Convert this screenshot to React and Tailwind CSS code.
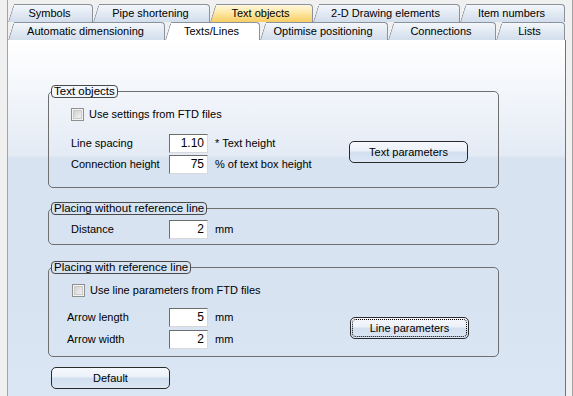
import React from "react";

function Tab({ label, w, kind }) {
  const bg =
    kind === "yellow"
      ? "bg-[linear-gradient(to_bottom,#fff8de,#fde8a6_45%,#f8cd62)]"
      : kind === "white"
      ? "bg-white"
      : "bg-[linear-gradient(to_bottom,#f4f7fb,#e0e8f2_55%,#d3deec)]";
  return (
    <div className={`relative h-[18px] shrink-0 ${w} ${kind ? "z-10" : ""}`}>
      <div
        className={`absolute left-0 top-0 bottom-0 w-[16px] origin-bottom-left skew-x-[-17deg] rounded-tl-[4px] border-l border-t border-[#8a929e] ${bg}`}
      />
      <div
        className={`absolute left-[6px] right-0 top-0 bottom-0 rounded-tr-[4px] border-t border-r border-[#8a929e] ${bg}`}
      />
      <span className="relative flex h-full items-center justify-center pr-[2px] leading-none">
        {label}
      </span>
    </div>
  );
}

function Check() {
  return (
    <div className="h-[13px] w-[13px] shrink-0 border border-[#8f8f8f] bg-[#f4f4f4] p-[1px]">
      <div className="h-full w-full border border-[#c9c9c9] bg-[linear-gradient(135deg,#d2d2d2,#f2f2f2)]" />
    </div>
  );
}

function Field({ value }) {
  return (
    <div className="flex h-[19px] w-[39px] shrink-0 items-center justify-end border-t border-l border-[#6e6e6e] border-r-[#d8d8d8] border-b-[#d8d8d8] border-r border-b bg-white pr-[3px] text-[12px]">
      {value}
    </div>
  );
}

function Btn({ children, focus, className = "" }) {
  return (
    <div
      className={`relative flex h-[22px] w-[119px] shrink-0 items-center justify-center rounded-[5px] border border-[#2a2a2a] bg-[linear-gradient(to_bottom,#f5f8fc_0%,#edf2f9_42%,#d2dfef_52%,#dde7f4_100%)] ${className}`}
    >
      {focus && (
        <div className="absolute inset-[1px] rounded-[4px] border border-dotted border-black" />
      )}
      <span className="relative">{children}</span>
    </div>
  );
}

function Legend({ children }) {
  return (
    <legend className="ml-[2px] h-[13px] rounded-[4px] border border-[#4a4a4a] bg-transparent px-[2px] text-[11.5px] leading-[11px]">
      {children}
    </legend>
  );
}

function Row({ label, value, unit, mt = "", pl = "pl-[22px]" }) {
  return (
    <div className={`flex h-[19px] items-center ${pl} ${mt}`}>
      <div className={`${pl === "pl-[22px]" ? "w-[98px]" : "w-[102px]"} shrink-0`}>{label}</div>
      <Field value={value} />
      <div className="ml-[7px] whitespace-nowrap">{unit}</div>
    </div>
  );
}

export default function App() {
  return (
    <div className="flex h-[396px] w-[573px] overflow-hidden bg-[#f0f0f0] font-['Liberation_Sans',Arial,sans-serif] text-[11px] leading-[13px] text-black">
      <div className="w-[7px] shrink-0" />
      <div className="w-px shrink-0 bg-[#a3a3a3]" />
      <div className="flex w-[558px] shrink-0 flex-col">
        <div className="mt-[4px] flex">
          <Tab label="Symbols" w="w-[85px]" />
          <Tab label="Pipe shortening" w="w-[117px]" />
          <Tab label="Text objects" w="w-[103px]" kind="yellow" />
          <Tab label="2-D Drawing elements" w="w-[147px]" />
          <Tab label="Item numbers" w="w-[105px]" />
        </div>
        <div className="flex">
          <Tab label="Automatic dimensioning" w="w-[157px]" />
          <Tab label="Texts/Lines" w="w-[95px]" kind="white" />
          <Tab label="Optimise positioning" w="w-[128px]" />
          <Tab label="Connections" w="w-[108px]" />
          <Tab label="Lists" w="w-[69px]" />
        </div>
        <div className="flex flex-1 flex-col border-r border-[#6e7384] bg-[linear-gradient(to_bottom,#ffffff_0px,#e4ebf5_115px,#d8e3f1_118px,#d7e3f1_250px,#dbe6f4_100%)] pl-[40px] pt-[45px]">
          {/* Group 1 */}
          <fieldset className="m-0 w-[451px] min-w-0 rounded-[5px] border border-[#6f6f6f] p-0 pb-[13px]">
            <Legend>Text objects</Legend>
            <div className="mt-[10px] flex items-center pl-[22px]">
              <Check />
              <span className="ml-[5px]">Use settings from FTD files</span>
            </div>
            <div className="mt-[13px] flex items-start">
              <div className="w-[300px] shrink-0">
                <Row label="Line spacing" value="1.10" unit="* Text height" />
                <Row label="Connection height" value="75" unit="% of text box height" mt="mt-[2px]" />
              </div>
              <Btn className="mt-[7px]">Text parameters</Btn>
            </div>
          </fieldset>

          {/* Group 2 */}
          <fieldset className="m-0 mt-[14px] w-[451px] min-w-0 rounded-[5px] border border-[#6f6f6f] p-0 pb-[5px]">
            <Legend>Placing without reference line</Legend>
            <Row label="Distance" value="2" unit="mm" mt="mt-[5px]" />
          </fieldset>

          {/* Group 3 */}
          <fieldset className="m-0 mt-[16px] w-[451px] min-w-0 rounded-[5px] border border-[#6f6f6f] p-0 pb-[7px]">
            <Legend>Placing with reference line</Legend>
            <div className="mt-[10px] flex items-center pl-[23px]">
              <Check />
              <span className="ml-[5px]">Use line parameters from FTD files</span>
            </div>
            <div className="mt-[11px] flex items-start">
              <div className="w-[301px] shrink-0">
                <Row label="Arrow length" value="5" unit="mm" pl="pl-[18px]" />
                <Row label="Arrow width" value="2" unit="mm" pl="pl-[18px]" mt="mt-[3px]" />
              </div>
              <Btn focus className="mt-[9px] w-[118px]">
                Line parameters
              </Btn>
            </div>
          </fieldset>

          <Btn className="ml-[3px] mt-[10px] w-[118px]">Default</Btn>
        </div>
      </div>
      <div className="w-[6px] shrink-0" />
      <div className="w-px shrink-0 bg-[#a3a3a3]" />
    </div>
  );
}
